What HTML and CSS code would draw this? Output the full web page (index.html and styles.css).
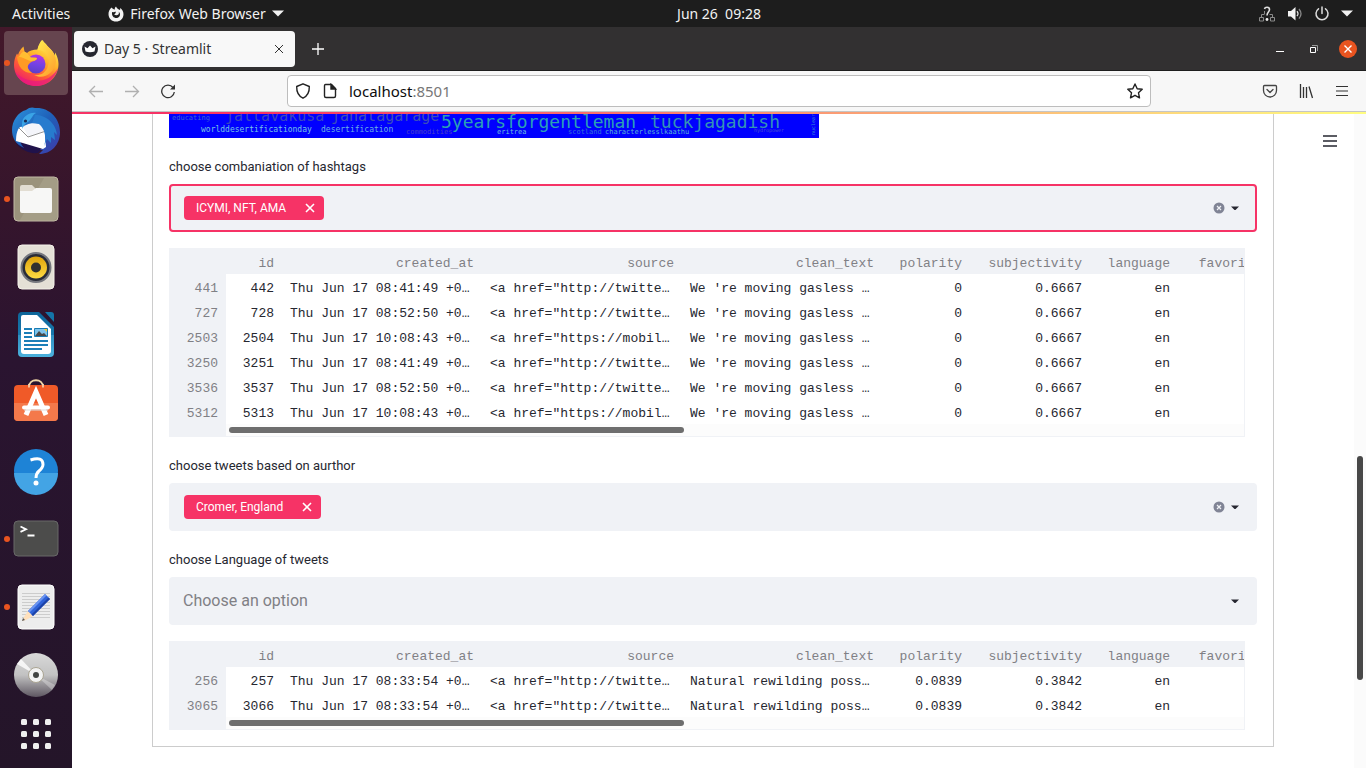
FILE: index.html
```html
<!DOCTYPE html>
<html lang="en">
<head>
<meta charset="utf-8">
<meta name="viewport" content="width=device-width, initial-scale=1">
<title>Day 5 · Streamlit</title>
<link rel="stylesheet" href="styles.css">
</head>
<body>
<header class="topbar">
  <div class="topbar-left">
    <button class="bar-button activities">Activities</button>
    <button class="bar-button app-menu">
      <svg width="16" height="16" viewBox="0 0 16 16"><path fill="#f2f2f2" d="M8 0.5C7 1.400 6.600 2.300 6.900 3.400C5.200 3.300 4.300 2.600 3.700 1.500C1.600 3.200 0.400 5.400 0.500 8.200C0.600 12.500 3.900 15.600 8 15.600C12.300 15.600 15.500 12.300 15.500 8.200C15.500 5.300 14 3.300 12 2C12.300 3 12.200 3.500 12 4C10.500 3.300 8.700 2.400 8 0.500Z"/><path fill="#1d1d1d" d="M4.200 6.100C5.600 6.300 6.700 6.100 7.500 5.500C8.300 7.200 7.300 7.700 6.100 8.300C7.300 9.300 9 9.500 10.300 8.600C11.100 7.900 11.100 6.600 10.500 5.600C12.400 7 12.500 9.300 11.200 10.800C9.600 12.600 6.500 12.500 5 10.600C4 9.300 3.700 7.600 4.200 6.100Z"/></svg>
      <span>Firefox Web Browser</span>
      <svg width="12" height="7" viewBox="0 0 12 7"><path fill="#f2f2f2" d="M0 .5h12L6 6.500z"/></svg>
    </button>
  </div>
  <time class="clock">Jun 26&nbsp; 09:28</time>
  <div class="status">
    <svg width="18" height="18" viewBox="0 0 18 18" fill="none"><path stroke="#8a8a8a" d="M1.500 12.500h4v3.500h-4zM12.500 12.500h4v3.500h-4zM3.500 12.500V9.500h3M14.500 12.500V9.500h-3M6.500 9V6"/><path stroke="#ddd" stroke-width="1.600" d="M6.500 4C7 1.500 11.500 1.500 11.500 4.500C11.500 7 9 7 9 10.500"/><circle cx="9" cy="14.500" r="1.400" fill="#eee"/></svg>
    <svg width="16" height="16" viewBox="0 0 16 16" fill="none"><path fill="#f2f2f2" d="M1 5h3l4.500-4v13.500L4 10.500H1z"/><path stroke="#ddd" stroke-width="1.300" d="M10 5.200q2 2.500 0 5"/><path stroke="#888" stroke-width="1.300" d="M12 3q4 4.800 0 9.700"/></svg>
    <svg width="16" height="16" viewBox="0 0 16 16" fill="none" stroke="#ddd" stroke-width="1.500" stroke-linecap="round"><path d="M4.500 2.800a6 6 0 1 0 7 0M8 1v6.500"/></svg>
    <svg width="12" height="7" viewBox="0 0 12 7"><path fill="#f2f2f2" d="M0 .5h12L6 6.500z"/></svg>
  </div>
</header>

<div class="desktop">
  <nav class="dock" aria-label="Dock">
    <button class="dock-item active running" aria-label="Firefox">
      <svg width="48" height="48" viewBox="0 0 48 48">
        <defs>
          <linearGradient id="ff1" x1=".8" y1=".1" x2=".3" y2="1"><stop offset="0" stop-color="#fff04f"/><stop offset=".35" stop-color="#ffb32b"/><stop offset=".65" stop-color="#ff5f35"/><stop offset="1" stop-color="#ee1a6c"/></linearGradient>
          <linearGradient id="ff2" x1=".6" y1="0" x2=".4" y2="1"><stop offset="0" stop-color="#b833e1"/><stop offset=".5" stop-color="#7542e5"/><stop offset="1" stop-color="#5b3fc7"/></linearGradient>
          <linearGradient id="ff3" x1="0" y1="0" x2=".7" y2="1"><stop offset="0" stop-color="#fff251"/><stop offset="1" stop-color="#ffa52f"/></linearGradient>
        </defs>
        <path fill="url(#ff1)" d="M30 1C28 3 26 7 25.500 10.500C21 10.500 17 12 15 14L12.500 12.500L11.500 7.500C9 9.500 7 12.500 6 16L5 14.500C3 18 2 22 2 26C2 38 12 47 24 47C37 47 46.500 37 46.500 25C46.500 20 44.500 15.500 43 13.500L43 17C41 11 36 8.500 34 5C32 3 31 2 30 1Z"/>
        <path fill="#e61a82" opacity=".7" d="M3 33C7 42 15 47 24 47C35 47 44 39 46 29C41 38 33 42 24 42C15 42 8 38 3 33Z"/>
        <path fill="url(#ff3)" d="M31 1C28 4 26 7 25.500 11C35 11 39 19 36 27C34 34 28 37 22 36C31 41 42 35 44 23C44 14 38 10 34 6C32 4 31 3 31 1Z"/>
        <circle cx="24" cy="25" r="9.500" fill="url(#ff2)"/>
        <path fill="#ff9a25" d="M5 18C10 15 14 15 17 18C20 19 23 18 25 19C25 22 20 22 18 24C14 27 16 31 20 34C11 34 6 28 5 18Z"/>
        <path fill="#ffcd36" d="M12 12.500L15 14L19 18.500L25 19C25 22 20 22 18 22C13 20 10 18 7 18C8 15 10 13 12 12.500Z" opacity=".7"/>
      </svg>
    </button>
    <button class="dock-item" aria-label="Thunderbird">
      <svg width="48" height="48" viewBox="0 0 48 48">
        <defs><linearGradient id="tb" x1="0" y1="0" x2="1" y2="1"><stop offset="0" stop-color="#2b93dd"/><stop offset=".5" stop-color="#1f5fb8"/><stop offset="1" stop-color="#4038a8"/></linearGradient></defs>
        <path fill="#20124b" d="M4 30L30 42L26 46C16 47 8 42 4 36Z"/>
        <path fill="url(#tb)" d="M14 3C17 0 21 0 23 1C37 0 48 11 48 25C48 38 39 47 27 47L31 43L28 43L32 39C20 31 16 20 13 19C7 25 6 35 12 41C3 37 0 30 0 23C0 14 6 5 14 3Z"/>
        <path fill="#fff" d="M8 20L32 17L34 40L31 42L4 34C4 28 5 23 8 20Z"/>
        <path fill="#f4f5fa" d="M11 20Q18 14 32 17L33 24L16 29Z"/>
        <path d="M7 21L16 30L34 24" fill="none" stroke="#777" stroke-width=".8"/>
        <path fill="#3aa4e6" d="M10 17C10 9 18 5 24 6C20 8 20 12 16 15C12 17 11 20 10 22Z"/>
        <path fill="#277bce" d="M23 8C34 8 44 16 45 28L42 25L43 33L39 30L39 36L35 32L32 39C35 31 33 22 27 17L20 16Z"/>
        <circle cx="13.500" cy="14" r="1.600" fill="#182b57"/>
      </svg>
    </button>
    <button class="dock-item running" aria-label="Files">
      <svg width="48" height="48" viewBox="0 0 48 48"><rect x="2" y="2" width="44" height="44" rx="4" fill="#9b937c" stroke="#c2baa5"/><path fill="#aaa38e" d="M32 3h9q4 0 4 4v34q0 4-4 4H8z" opacity=".6"/><path fill="#e2ddd2" d="M8 12q0-2 2-2h10l4 4h8v8H8z"/><path fill="#f7f7f6" d="M8 16h12l4-3h14q2 0 2 2v21q0 2-2 2H10q-2 0-2-2z"/></svg>
    </button>
    <button class="dock-item" aria-label="Rhythmbox">
      <svg width="48" height="48" viewBox="0 0 48 48"><defs><linearGradient id="rb" x1="0" y1="0" x2="0" y2="1"><stop offset="0" stop-color="#dda20c"/><stop offset="1" stop-color="#ffdc43"/></linearGradient></defs><rect x="6" y="2" width="36" height="44" rx="4" fill="#e4e0d6" stroke="#f5f2ea"/><circle cx="24" cy="24.500" r="14.500" fill="#292c37" stroke="#75777d" stroke-width="2"/><circle cx="24" cy="24.500" r="11" fill="url(#rb)"/><circle cx="24" cy="24.500" r="5" fill="#303030"/></svg>
    </button>
    <button class="dock-item" aria-label="LibreOffice Writer">
      <svg width="48" height="48" viewBox="0 0 48 48"><defs><linearGradient id="lo" x1="0" y1="0" x2="0" y2="1"><stop offset="0" stop-color="#0d6599"/><stop offset=".5" stop-color="#1878ad"/><stop offset=".51" stop-color="#2f8fc0"/><stop offset="1" stop-color="#4bb1dd"/></linearGradient></defs><path fill="url(#lo)" d="M10 1h17l15 15v26q0 4-4 4H10q-4 0-4-4V5q0-4 4-4z"/><path fill="#1475a8" d="M33 1h6q3 0 3 3v7z"/><path fill="#fff" d="M11 4h14l14 14v22q0 3-3 3H12q-3 0-3-3V6q0-2 2-2z"/><path stroke="#1b7fb8" stroke-width="2" d="M12 18h8M12 22h8M12 26h8M12 30h24M12 34h24M12 38h18"/><path fill="#7dc4ec" stroke="#167bb3" d="M22.500 17.500h13v8h-13z"/><path fill="#48494a" d="M23 25l4-5 3 3 2-1 3 3z"/><path fill="#f2c92e" d="M32 18h3v3z"/></svg>
    </button>
    <button class="dock-item" aria-label="Ubuntu Software">
      <svg width="48" height="48" viewBox="0 0 48 48"><path d="M17 8C17-1 31-1 31 8" fill="none" stroke="#f0d6a6" stroke-width="2"/><rect x="2" y="6" width="44" height="36" rx="4" fill="#f05a28"/><path fill="#f4794b" d="M2 24h44v14q0 4-4 4H6q-4 0-4-4z"/><path fill="none" stroke="#f8e2bd" stroke-width="1.500" d="M17 8.500V5M31 8.500V5"/><path fill="none" stroke="#fff" stroke-width="5" d="M14 36L24 13L34 36"/><path stroke="#fff" stroke-width="4" stroke-linecap="round" d="M12 28.500h24"/><path stroke="#ddd" d="M12 31h24"/></svg>
    </button>
    <button class="dock-item" aria-label="Help">
      <svg width="48" height="48" viewBox="0 0 48 48"><circle cx="24" cy="24" r="22" fill="#1e83d6"/><path fill="#43a4e5" d="M2 26h44a22 22 0 0 1-44 0z"/><path d="M18.500 13Q31 9 31 17.500Q31 20.500 27 24Q24 26.500 24 31" fill="none" stroke="#fff" stroke-width="3"/><circle cx="24" cy="36" r="2.500" fill="#fff"/></svg>
    </button>
    <button class="dock-item running" aria-label="Terminal">
      <svg width="48" height="48" viewBox="0 0 48 48"><rect x="2" y="6" width="44" height="35" rx="4" fill="#4c4c4b" stroke="#686868"/><path fill="none" stroke="#fff" stroke-width="1.800" d="M8.500 11.500l5.500 2.700-5.500 2.700M15.500 20.500h7"/></svg>
    </button>
    <button class="dock-item running" aria-label="Text Editor">
      <svg width="48" height="48" viewBox="0 0 48 48"><rect x="6" y="2" width="36" height="44" rx="4" fill="#ededed" stroke="#fff"/><path stroke="#ccc" d="M10 10.500h28M10 13.500h28M10 16.500h28M10 19.500h28M10 22.500h28M10 25.500h28M10 28.500h28M10 31.500h28M10 34.500h28"/><path fill="#ffe0bc" d="M16 28l5 5-7 4-4 1 2-4z"/><path fill="#555" d="M10 38l1-3 2 2z"/><path fill="#2f62d8" d="M16 28L33 11l5 5L21 33z"/><path fill="#6b94f1" d="M16 28L33 11l1.500 1.500L17.500 29.500z"/><path fill="#1d43a7" d="M19.500 31.500L36.500 14.500l1.500 1.500L21 33z"/></svg>
    </button>
    <button class="dock-item" aria-label="Disc">
      <svg width="48" height="48" viewBox="0 0 48 48"><defs><linearGradient id="cd" x1="0" y1="0" x2="0" y2="1"><stop offset="0" stop-color="#d9d9d9"/><stop offset=".5" stop-color="#c2c2c2"/><stop offset="1" stop-color="#5e5762"/></linearGradient></defs><circle cx="24" cy="24" r="22" fill="url(#cd)"/><path fill="#fff" opacity=".8" d="M24 24L5 13l4-5z"/><path fill="#fff" opacity=".3" d="M24 24l19 10-3 5z"/><circle cx="24" cy="24" r="7.500" fill="#f2f2f2" stroke="#aaa492"/><circle cx="24" cy="24" r="3" fill="#414442"/></svg>
    </button>
    <button class="dock-item apps" aria-label="Show Applications">
      <svg width="30" height="30" viewBox="0 0 30 30" fill="#efefef"><rect width="6" height="6" rx="1.500"/><rect x="12" width="6" height="6" rx="1.500"/><rect x="24" width="6" height="6" rx="1.500"/><rect y="12" width="6" height="6" rx="1.500"/><rect x="12" y="12" width="6" height="6" rx="1.500"/><rect x="24" y="12" width="6" height="6" rx="1.500"/><rect y="24" width="6" height="6" rx="1.500"/><rect x="12" y="24" width="6" height="6" rx="1.500"/><rect x="24" y="24" width="6" height="6" rx="1.500"/></svg>
    </button>
  </nav>

  <div class="browser">
    <div class="tabstrip">
      <div class="tab">
        <svg width="16" height="16" viewBox="0 0 16 16"><circle cx="8" cy="8" r="8" fill="#262730"/><path fill="#fff" d="M2.500 5.500L5.500 7.300L8 4.500L10.500 7.300L13.500 5.500L12.500 10.500Q8 12 3.500 10.500z"/></svg>
        <span class="tab-title">Day 5 · Streamlit</span>
        <button class="icon-button small" aria-label="Close tab"><svg width="8" height="8" viewBox="0 0 8 8"><path stroke="#333" d="M0 0l8 8M8 0L0 8"/></svg></button>
      </div>
      <button class="icon-button new-tab" aria-label="New tab"><svg width="12" height="12" viewBox="0 0 12 12"><path stroke="#fff" stroke-width="1.300" d="M6 0v12M0 6h12"/></svg></button>
      <div class="window-controls">
        <button class="icon-button" aria-label="Minimize"><svg width="18" height="18" viewBox="0 0 18 18"><path stroke="#fff" d="M5 11.500h8"/></svg></button>
        <button class="icon-button" aria-label="Restore"><svg width="18" height="18" viewBox="0 0 18 18" fill="none"><path stroke="#999" d="M7 5.500h5.500V11"/><path stroke="#fff" d="M5.500 7.500h5v5h-5z"/></svg></button>
        <button class="icon-button" aria-label="Close"><svg width="18" height="18" viewBox="0 0 18 18"><circle cx="9" cy="9" r="9" fill="#e95420"/><path stroke="#fff" stroke-width="1.400" d="M5.500 5.500l7 7M12.500 5.500l-7 7"/></svg></button>
      </div>
    </div>

    <div class="toolbar">
      <div class="nav-buttons">
        <button class="icon-button" aria-label="Back"><svg width="16" height="16" viewBox="0 0 16 16" fill="none" stroke="#b0b0b0" stroke-width="1.300"><path d="M15 8.500H1.500M7 3L1.500 8.500L7 14"/></svg></button>
        <button class="icon-button" aria-label="Forward"><svg width="16" height="16" viewBox="0 0 16 16" fill="none" stroke="#b0b0b0" stroke-width="1.300"><path d="M1 8.500h13.500M9 3l5.500 5.500L9 14"/></svg></button>
        <button class="icon-button" aria-label="Reload"><svg width="16" height="16" viewBox="0 0 16 16" fill="none"><path stroke="#333" stroke-width="1.300" d="M13 4.500A6.300 6.300 0 1 0 14.300 9"/><path fill="#333" d="M15 1.500v5H10z"/></svg></button>
      </div>
      <div class="urlbar">
        <svg width="16" height="16" viewBox="0 0 16 16" fill="none" stroke="#222" stroke-width="1.400"><path d="M8 .8L14.300 3.500C14.500 9 12.500 13 8 15.200C3.500 13 1.500 9 1.700 3.500z" stroke-linejoin="round"/></svg>
        <svg width="16" height="16" viewBox="0 0 16 16" fill="none" stroke="#222" stroke-width="1.400"><path d="M3.500 1.500h6l4 4v7.500q0 1.500-1.500 1.500H4q-1.500 0-1.500-1.500V3q0-1.500 1-1.500z"/><path fill="#222" d="M9 1.500V6h4.500z"/></svg>
        <a class="url" href="#app">localhost<span class="port">:8501</span></a>
        <button class="icon-button" aria-label="Bookmark this page"><svg width="16" height="16" viewBox="0 0 16 16" fill="none" stroke="#222" stroke-width="1.400" stroke-linejoin="round"><path d="M8 1l2.200 4.700 5 .6-3.700 3.500 1 5L8 12.300 3.500 14.800l1-5L.8 6.300l5-.6z"/></svg></button>
      </div>
      <div class="tool-buttons">
        <button class="icon-button" aria-label="Save to Pocket"><svg width="16" height="16" viewBox="0 0 16 16" fill="none" stroke="#444" stroke-width="1.300" stroke-linecap="round" stroke-linejoin="round"><path d="M2.500 2.500h11q1 0 1 1V7.500a6.500 6.500 0 0 1-13 0v-4q0-1 1-1z"/><path d="M5 6.500l3 3 3-3"/></svg></button>
        <button class="icon-button" aria-label="Library"><svg width="16" height="16" viewBox="0 0 16 16" stroke="#333" stroke-width="1.300"><path d="M2.500 1v14M5.500 4v11M8.500 4v11M11 3.500L14.500 15"/></svg></button>
        <button class="icon-button" aria-label="Open menu"><svg width="16" height="16" viewBox="0 0 16 16" stroke="#333" stroke-width="1.200"><path d="M2 3.500h12M2 8h12M2 12.500h12"/></svg></button>
      </div>
    </div>

    <div class="viewport" id="app">
      <div class="decoration"></div>
      <main class="report">
        <svg class="wordcloud" width="650" height="26" viewBox="0 0 650 26" role="img" aria-label="Word cloud">
          <rect width="650" height="26" fill="#0000ff"/>
          <g class="cloud-7"><text x="3" y="8" fill="#3a65d0">educating</text><text x="237" y="22" fill="#4a42c4">commodities</text><text x="328" y="22" fill="#6fbedb">eritrea</text><text x="399" y="22" fill="#3570d4">scotland</text><text x="436" y="22" fill="#5bb4d3">characterlesslkaathu</text></g>
          <g class="cloud-8"><text x="32" y="20" fill="#76c5e4">worlddesertificationday</text><text x="152" y="20" fill="#6bb2e2">desertification</text></g>
          <g class="cloud-15"><text x="56" y="9" fill="#3946bf">jallavakusa</text><text x="162" y="9" fill="#3c4fb9">janatagarage</text></g>
          <g class="cloud-18"><text x="272" y="16" fill="#2ba0b4">5yearsforgentleman</text><text x="481" y="16" fill="#3392b5">tuckjagadish</text></g>
          <g class="cloud-5"><text x="585" y="20" fill="#4a50d0">hydropower</text><text transform="translate(646 23) rotate(-90)" fill="#3b8bd0">nuclear</text></g>
        </svg>

        <div class="field">
          <label class="field-label" for="hashtags">choose combaniation of hashtags</label>
          <div class="select focused">
            <span class="tag">ICYMI, NFT, AMA<button class="tag-remove" aria-label="Remove ICYMI, NFT, AMA"><svg width="10" height="10" viewBox="0 0 10 10"><path stroke="#fff" stroke-width="1.600" d="M1 1l8 8M9 1L1 9"/></svg></button></span>
            <input class="select-input" id="hashtags" type="text">
            <button class="select-icon" aria-label="Clear all"><svg width="16" height="16" viewBox="0 0 16 16"><circle cx="8" cy="8" r="5.500" fill="#808495"/><path stroke="#f0f2f6" stroke-width="1.200" d="M6 6l4 4M10 6l-4 4"/></svg></button>
            <button class="select-icon" aria-label="Open"><svg width="16" height="16" viewBox="0 0 16 16"><path fill="#262730" d="M4 6.500h8L8.500 10h-1z"/></svg></button>
          </div>
        </div>

        <div class="dataframe">
          <table class="data">
            <colgroup><col class="c-index"><col class="c-id"><col class="c-text"><col class="c-text"><col class="c-text"><col class="c-short"><col class="c-subj"><col class="c-short"><col class="c-fav"></colgroup>
            <thead><tr><th></th><th>id</th><th>created_at</th><th>source</th><th>clean_text</th><th>polarity</th><th>subjectivity</th><th>language</th><th>favorite_count</th></tr></thead>
            <tbody>
              <tr><th>441</th><td>442</td><td class="txt">Thu Jun 17 08:41:49 +0…</td><td class="txt">&lt;a href="http://twitte…</td><td class="txt">We 're moving gasless …</td><td>0</td><td>0.6667</td><td>en</td><td></td></tr>
              <tr><th>727</th><td>728</td><td class="txt">Thu Jun 17 08:52:50 +0…</td><td class="txt">&lt;a href="http://twitte…</td><td class="txt">We 're moving gasless …</td><td>0</td><td>0.6667</td><td>en</td><td></td></tr>
              <tr><th>2503</th><td>2504</td><td class="txt">Thu Jun 17 10:08:43 +0…</td><td class="txt">&lt;a href="https://mobil…</td><td class="txt">We 're moving gasless …</td><td>0</td><td>0.6667</td><td>en</td><td></td></tr>
              <tr><th>3250</th><td>3251</td><td class="txt">Thu Jun 17 08:41:49 +0…</td><td class="txt">&lt;a href="http://twitte…</td><td class="txt">We 're moving gasless …</td><td>0</td><td>0.6667</td><td>en</td><td></td></tr>
              <tr><th>3536</th><td>3537</td><td class="txt">Thu Jun 17 08:52:50 +0…</td><td class="txt">&lt;a href="http://twitte…</td><td class="txt">We 're moving gasless …</td><td>0</td><td>0.6667</td><td>en</td><td></td></tr>
              <tr><th>5312</th><td>5313</td><td class="txt">Thu Jun 17 10:08:43 +0…</td><td class="txt">&lt;a href="https://mobil…</td><td class="txt">We 're moving gasless …</td><td>0</td><td>0.6667</td><td>en</td><td></td></tr>
            </tbody>
          </table>
          <div class="hscroll"><div class="hscroll-track"><div class="hscroll-thumb"></div></div></div>
        </div>

        <div class="field">
          <label class="field-label" for="author">choose tweets based on aurthor</label>
          <div class="select">
            <span class="tag">Cromer, England<button class="tag-remove" aria-label="Remove Cromer, England"><svg width="10" height="10" viewBox="0 0 10 10"><path stroke="#fff" stroke-width="1.600" d="M1 1l8 8M9 1L1 9"/></svg></button></span>
            <input class="select-input" id="author" type="text">
            <button class="select-icon" aria-label="Clear all"><svg width="16" height="16" viewBox="0 0 16 16"><circle cx="8" cy="8" r="5.500" fill="#808495"/><path stroke="#f0f2f6" stroke-width="1.200" d="M6 6l4 4M10 6l-4 4"/></svg></button>
            <button class="select-icon" aria-label="Open"><svg width="16" height="16" viewBox="0 0 16 16"><path fill="#262730" d="M4 6.500h8L8.500 10h-1z"/></svg></button>
          </div>
        </div>

        <div class="field">
          <label class="field-label" for="language">choose Language of tweets</label>
          <div class="select">
            <input class="select-input" id="language" type="text" placeholder="Choose an option">
            <button class="select-icon" aria-label="Open"><svg width="16" height="16" viewBox="0 0 16 16"><path fill="#262730" d="M4 6.500h8L8.500 10h-1z"/></svg></button>
          </div>
        </div>

        <div class="dataframe">
          <table class="data">
            <colgroup><col class="c-index"><col class="c-id"><col class="c-text"><col class="c-text"><col class="c-text"><col class="c-short"><col class="c-subj"><col class="c-short"><col class="c-fav"></colgroup>
            <thead><tr><th></th><th>id</th><th>created_at</th><th>source</th><th>clean_text</th><th>polarity</th><th>subjectivity</th><th>language</th><th>favorite_count</th></tr></thead>
            <tbody>
              <tr><th>256</th><td>257</td><td class="txt">Thu Jun 17 08:33:54 +0…</td><td class="txt">&lt;a href="http://twitte…</td><td class="txt">Natural rewilding poss…</td><td>0.0839</td><td>0.3842</td><td>en</td><td></td></tr>
              <tr><th>3065</th><td>3066</td><td class="txt">Thu Jun 17 08:33:54 +0…</td><td class="txt">&lt;a href="http://twitte…</td><td class="txt">Natural rewilding poss…</td><td>0.0839</td><td>0.3842</td><td>en</td><td></td></tr>
            </tbody>
          </table>
          <div class="hscroll"><div class="hscroll-track"><div class="hscroll-thumb"></div></div></div>
        </div>
      </main>
      <aside class="page-menu">
        <button class="icon-button" aria-label="Main menu"><svg width="16" height="16" viewBox="0 0 16 16" stroke="#262730" stroke-width="1.700"><path d="M1 3h14M1 8h14M1 13h14"/></svg></button>
      </aside>
      <div class="vscroll"><div class="vscroll-thumb"></div></div>
    </div>
  </div>
</div>
</body>
</html>
```
FILE: styles.css
```css
* { box-sizing: border-box; }

body {
  margin: 0;
  height: 100vh;
  display: flex;
  flex-direction: column;
  overflow: hidden;
  background: #fff;
  font-family: "Noto Sans", "Open Sans", sans-serif;
  font-size: 14px;
}

button {
  margin: 0;
  padding: 0;
  border: 0;
  background: none;
  color: inherit;
  font: inherit;
}

svg { display: block; flex: none; }

/* System bar */
.topbar {
  flex: none;
  height: 27px;
  display: grid;
  grid-template-columns: 72px 1fr auto 1fr;
  align-items: center;
  background: #1d1d1d;
  color: #f2f2f2;
}
.topbar-left { grid-column: 1 / 3; display: flex; align-items: center; gap: 38px; padding-left: 12px; }
.bar-button, .clock { line-height: 20px; white-space: nowrap; }
.app-menu { display: flex; align-items: center; gap: 6px; }
.status { display: flex; justify-content: flex-end; align-items: center; gap: 11px; padding-right: 13px; }

/* Dock */
.desktop { flex: 1; min-height: 0; display: flex; }
.dock {
  flex: none;
  width: 72px;
  display: flex;
  flex-direction: column;
  gap: 4px;
  padding: 4px;
  background: linear-gradient(#43182a 0, #35152c 25%, #2a1430 45%, #241529 100%);
}
.dock-item {
  flex: none;
  height: 64px;
  position: relative;
  display: grid;
  place-items: center;
  border-radius: 4px;
}
.dock-item.active { background: #66454f; }
.dock-item.running::before {
  content: "";
  position: absolute;
  left: 0;
  top: 29px;
  width: 6px;
  height: 6px;
  border-radius: 50%;
  background: #e95420;
}
.dock-item.apps { height: 46px; }

/* Browser chrome */
.browser { flex: 1; min-width: 0; display: flex; flex-direction: column; }
.tabstrip {
  flex: none;
  height: 44px;
  display: flex;
  align-items: center;
  padding: 0 9px 0 2px;
  background: #323031;
  border-bottom: 1px solid #1e1e1e;
}
.tab {
  width: 221px;
  height: 36px;
  display: flex;
  align-items: center;
  gap: 6px;
  padding: 0 8px;
  border-radius: 4px;
  background: #f8f8f8;
  color: #333;
}
.tab-title { flex: 1; white-space: nowrap; }
.icon-button { display: grid; place-items: center; width: 18px; height: 18px; flex: none; }
.icon-button.small { width: 16px; }
.new-tab { margin-left: 14px; }
.window-controls { display: flex; gap: 16px; margin-left: auto; }

.toolbar {
  flex: none;
  height: 41px;
  display: grid;
  grid-template-columns: 215px 1fr 215px;
  align-items: center;
  background: #f7f7f7;
  border-bottom: 1px solid #c5c5c5;
}
.nav-buttons, .tool-buttons { display: flex; gap: 18px; }
.nav-buttons { padding-left: 15px; }
.tool-buttons { justify-content: flex-end; padding-right: 15px; }
.urlbar {
  height: 32px;
  display: flex;
  align-items: center;
  gap: 11px;
  padding: 0 6px 0 7px;
  border: 1px solid #bdbdbd;
  border-radius: 4px;
  background: #fff;
}
.url { flex: 1; color: #0c0c0d; text-decoration: none; font-size: 15px; }
.port { color: #777; }

/* Page */
.viewport {
  flex: 1;
  min-height: 0;
  position: relative;
  display: grid;
  grid-template-columns: 80px 1fr 80px 12px;
  align-items: start;
  overflow: hidden;
  color: #262730;
}
.decoration {
  position: absolute;
  top: 0;
  left: 0;
  right: 0;
  height: 2px;
  background: linear-gradient(90deg, #f63366 0, #f63366 15%, #fffd80 100%);
}
.report {
  grid-column: 2;
  min-width: 0;
  display: flex;
  flex-direction: column;
  gap: 16px;
  padding: 0 16px 16px;
  border: 1px solid #ccc;
  border-top: 0;
}
.wordcloud { font-family: "DejaVu Sans Mono", monospace; }
.cloud-5 { font-size: 5px; }
.cloud-7 { font-size: 7px; }
.cloud-8 { font-size: 8px; }
.cloud-15 { font-size: 15px; }
.cloud-18 { font-size: 18px; }

.field { display: flex; flex-direction: column; gap: 4px; font-family: Roboto, sans-serif; }
.field-label { font-size: 13px; line-height: 26px; }
.select {
  height: 48px;
  display: flex;
  align-items: center;
  padding: 0 12px;
  border: 2px solid #f0f2f6;
  border-radius: 4px;
  background: #f0f2f6;
}
.select.focused { border-color: #f63366; }
.tag {
  height: 24px;
  display: flex;
  align-items: center;
  gap: 19px;
  padding: 0 9px 0 12px;
  border-radius: 4px;
  margin-left: 1px;
  background: #f63366;
  color: #fff;
  font-size: 12px;
  white-space: nowrap;
}
.select-input {
  flex: 1;
  min-width: 0;
  padding: 0;
  border: 0;
  outline: 0;
  background: transparent;
  font: 16px/24px Roboto, sans-serif;
}
.select-input::placeholder { color: #808085; opacity: 1; }
.select-icon { width: 16px; height: 16px; }

.dataframe {
  margin-right: 12px;
  border: 1px solid #f0f2f6;
  border-width: 0 1px 1px 0;
  overflow: hidden;
  font-family: "Liberation Mono", monospace;
  font-size: 13px;
}
.data { width: 1147px; table-layout: fixed; border-collapse: collapse; }
.c-index { width: 57px; }
.c-id { width: 56px; }
.c-text { width: 200px; }
.c-short { width: 88px; }
.c-subj { width: 120px; }
.c-fav { width: 138px; }
.data th, .data td {
  height: 25px;
  padding: 5px 8px 0;
  line-height: 20px;
  text-align: right;
  font-weight: 400;
  white-space: nowrap;
}
.data th { background: #f0f2f6; color: #808085; }
.data thead th { height: 26px; }
.data .txt { text-align: left; }
.hscroll { height: 12px; padding-left: 57px; background: #f0f2f6; }
.hscroll-track { height: 12px; padding: 3px; background: #fcfcfc; }
.hscroll-thumb { width: 45%; height: 6px; border-radius: 3px; background: #6e6e6e; }

.page-menu { display: flex; justify-content: flex-end; padding: 20px 15px 0 0; }
.vscroll {
  height: 100%;
  min-height: 0;
  display: grid;
  grid-template-rows: 344fr 224fr 88fr;
  padding: 0 3px;
  background: #fbfbfb;
  align-self: stretch;
}
.vscroll-thumb { grid-row: 2; border-radius: 3px; background: #484848; }
```
